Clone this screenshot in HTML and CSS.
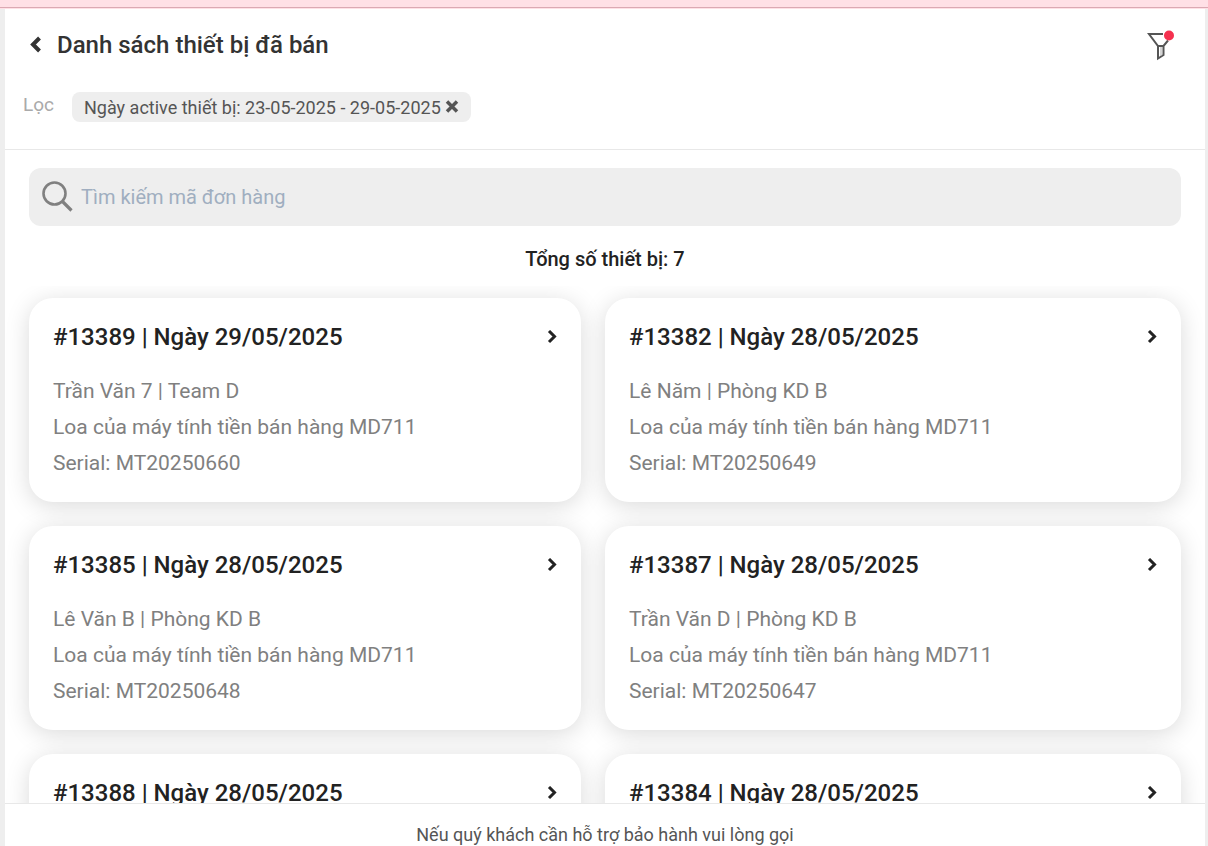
FILE: index.html
```html
<!DOCTYPE html>
<html lang="vi">
<head>
    <meta charset="UTF-8">
    <meta name="viewport" content="width=device-width, initial-scale=1.0">
    <title>Danh sách thiết bị đã bán</title>
    <link rel="stylesheet" href="styles.css">
</head>
<body>
    <div class="top-bar"></div>
    <div class="page">
        <header class="header">
            <div class="title-row">
                <button type="button" class="icon-btn back-btn" aria-label="Quay lại">
                    <svg width="12" height="18" viewBox="0 0 12 18"><path d="M10.500 2 L4 8.500 L10.500 15" fill="none" stroke="#333" stroke-width="4"/></svg>
                </button>
                <h1>Danh sách thiết bị đã bán</h1>
                <button type="button" class="icon-btn filter-btn" aria-label="Bộ lọc">
                    <svg width="32" height="32" viewBox="0 0 32 32">
                        <path d="M18 5 H4 L13 17 H18.500 L23 11.500 M13 17 V29.500 L18.500 26 V17" fill="none" stroke="#555" stroke-width="2"/>
                        <path d="M16 18 V27" stroke="#aaa" stroke-width="1"/>
                        <circle cx="24" cy="6.500" r="5" fill="#f5314f"/>
                    </svg>
                </button>
            </div>
            <div class="filter-row">
                <span class="filter-label">Lọc</span>
                <div class="chip">
                    <span>Ngày active thiết bị: 23-05-2025 - 29-05-2025</span>
                    <button type="button" class="icon-btn" aria-label="Xóa bộ lọc">
                        <svg width="14" height="14" viewBox="0 0 14 14"><path d="M2 1.500 L12 11.500 M12 1.500 L2 11.500" stroke="#555" stroke-width="3.500"/></svg>
                    </button>
                </div>
            </div>
        </header>

        <div class="search-box">
            <svg width="32" height="32" viewBox="0 0 32 32"><circle cx="13.500" cy="12.500" r="11" fill="none" stroke="#808080" stroke-width="2.600"/><path d="M21.500 20.500 L30.500 29.500" stroke="#808080" stroke-width="3.200"/></svg>
            <input type="text" placeholder="Tìm kiếm mã đơn hàng" aria-label="Tìm kiếm mã đơn hàng">
        </div>
        <p class="total">Tổng số thiết bị: 7</p>

        <main class="device-list">
            <a href="#13389" class="card">
                <h2>#13389 | Ngày 29/05/2025 <svg class="arrow" viewBox="0 0 10 14"><path d="M2 1 L7.500 6.500 L2 12"/></svg></h2>
                <p>Trần Văn 7 | Team D</p>
                <p>Loa của máy tính tiền bán hàng MD711</p>
                <p>Serial: MT20250660</p>
            </a>
            <a href="#13382" class="card">
                <h2>#13382 | Ngày 28/05/2025 <svg class="arrow" viewBox="0 0 10 14"><path d="M2 1 L7.500 6.500 L2 12"/></svg></h2>
                <p>Lê Năm | Phòng KD B</p>
                <p>Loa của máy tính tiền bán hàng MD711</p>
                <p>Serial: MT20250649</p>
            </a>
            <a href="#13385" class="card">
                <h2>#13385 | Ngày 28/05/2025 <svg class="arrow" viewBox="0 0 10 14"><path d="M2 1 L7.500 6.500 L2 12"/></svg></h2>
                <p>Lê Văn B | Phòng KD B</p>
                <p>Loa của máy tính tiền bán hàng MD711</p>
                <p>Serial: MT20250648</p>
            </a>
            <a href="#13387" class="card">
                <h2>#13387 | Ngày 28/05/2025 <svg class="arrow" viewBox="0 0 10 14"><path d="M2 1 L7.500 6.500 L2 12"/></svg></h2>
                <p>Trần Văn D | Phòng KD B</p>
                <p>Loa của máy tính tiền bán hàng MD711</p>
                <p>Serial: MT20250647</p>
            </a>
            <a href="#13388" class="card">
                <h2>#13388 | Ngày 28/05/2025 <svg class="arrow" viewBox="0 0 10 14"><path d="M2 1 L7.500 6.500 L2 12"/></svg></h2>
            </a>
            <a href="#13384" class="card">
                <h2>#13384 | Ngày 28/05/2025 <svg class="arrow" viewBox="0 0 10 14"><path d="M2 1 L7.500 6.500 L2 12"/></svg></h2>
            </a>
        </main>

        <footer class="footer">Nếu quý khách cần hỗ trợ bảo hành vui lòng gọi</footer>
    </div>
</body>
</html>
```
FILE: styles.css
```css
* {
    box-sizing: border-box;
}
body {
    font-family: Roboto, "Noto Sans", sans-serif;
    margin: 0;
    height: 100vh;
    display: flex;
    flex-direction: column;
    background-color: #eee;
    color: #222;
}
h1, h2, p {
    margin: 0;
}
.top-bar {
    flex: none;
    height: 9px;
    background: linear-gradient(#ffe0e6 7px, #dba9b3 7px, #dba9b3 8px, #ffe0e6 8px);
}
.page {
    flex: 1;
    min-height: 0;
    display: flex;
    flex-direction: column;
    margin: 0 3px 0 5px;
    background: white;
}
.icon-btn {
    display: flex;
    padding: 0;
    border: none;
    background: none;
    cursor: pointer;
}
.header {
    padding: 20px 24px 27px;
    border-bottom: 1px solid #e8e8e8;
}
.title-row {
    display: flex;
    align-items: center;
    height: 32px;
}
.title-row h1 {
    margin-left: 16px;
    font-size: 24px;
    font-weight: 500;
    line-height: 32px;
    color: #333;
}
.filter-btn {
    margin-left: auto;
    margin-right: 4px;
}
.filter-row {
    display: flex;
    align-items: flex-start;
    gap: 18px;
    margin-top: 31px;
}
.filter-label {
    margin-left: -6px;
    font-size: 19px;
    line-height: 26px;
    color: #aaa;
}
.chip {
    display: flex;
    align-items: center;
    gap: 4px;
    height: 30px;
    padding: 0 12px;
    border-radius: 8px;
    background-color: #eee;
    font-size: 18px;
    color: #555;
}
.search-box {
    display: flex;
    align-items: center;
    flex: none;
    gap: 8px;
    height: 58px;
    margin: 18px 24px 0;
    padding: 0 12px;
    border-radius: 12px;
    background-color: #eee;
}
.search-box input {
    flex: 1;
    padding: 0;
    border: none;
    outline: none;
    background: none;
    font-family: inherit;
    font-size: 20px;
    line-height: 32px;
}
.search-box input::placeholder {
    color: #a0aec0;
}
.total {
    margin: 17px 0 11px;
    font-size: 20px;
    font-weight: 500;
    line-height: 32px;
    text-align: center;
}
.device-list {
    flex: 1;
    min-height: 0;
    display: grid;
    grid-template-columns: 1fr 1fr;
    grid-auto-rows: 204px;
    row-gap: 24px;
    padding: 12px 24px;
    overflow-y: auto;
    scrollbar-width: none;
}
.card {
    padding: 21px 24px;
    border-radius: 24px;
    background: white;
    box-shadow: 0 4px 24px rgba(0, 0, 0, 0.15);
    color: #808080;
    text-decoration: none;
}
.card:nth-child(odd) {
    margin-right: 24px;
}
.card h2 {
    display: flex;
    align-items: center;
    justify-content: space-between;
    margin-bottom: 18px;
    font-size: 24px;
    font-weight: 500;
    line-height: 36px;
    color: #222;
}
.card p {
    font-size: 21px;
    line-height: 36px;
}
.arrow {
    width: 10px;
    height: 14px;
    fill: none;
    stroke: #222;
    stroke-width: 3;
}
.footer {
    flex: none;
    padding-top: 20px;
    border-top: 1px solid #e8e8e8;
    font-size: 18px;
    line-height: 22px;
    text-align: center;
    color: #555;
}
```
